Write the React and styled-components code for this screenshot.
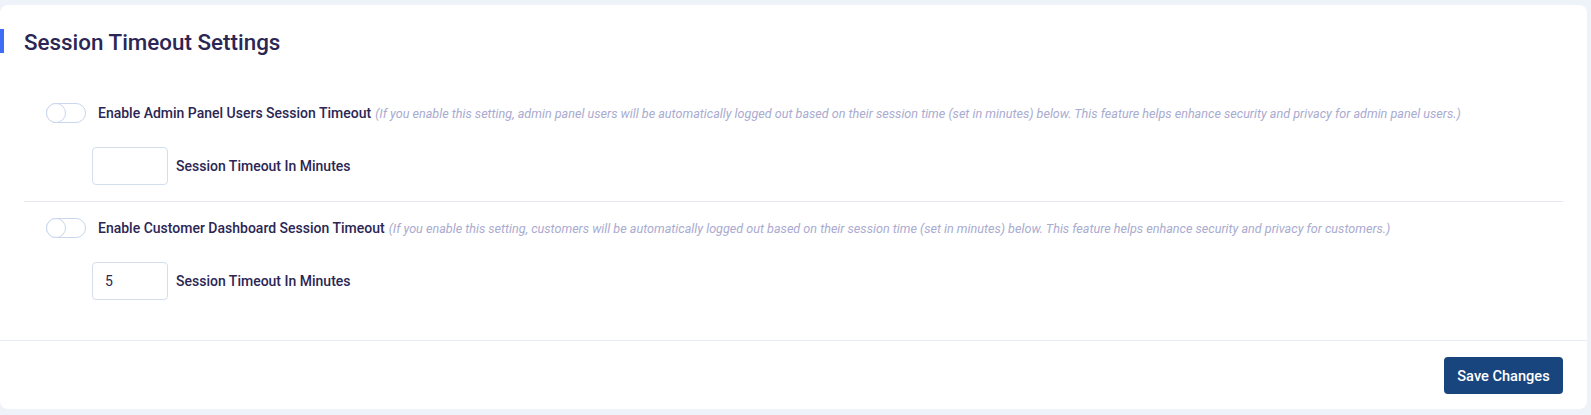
import React from 'react'
import styled, { createGlobalStyle } from 'styled-components'

const Global = createGlobalStyle`
  body {
    margin: 0;
    background: #eef2f9;
    font-family: Roboto, "Liberation Sans", sans-serif;
  }
`

const Page = styled.div`
  padding-top: 5px;
  padding-right: 4px;
`

const Card = styled.div`
  background: #fff;
  border-radius: 8px;
  height: 404px;
  display: flex;
  flex-direction: column;
`

const Header = styled.div`
  position: relative;
  padding: 24px 24px 0;
  &::before {
    content: '';
    position: absolute;
    left: 0;
    top: 24px;
    width: 4px;
    height: 24px;
    background: #3d6ef5;
  }
`

const Title = styled.h2`
  margin: 0;
  font-size: 22.4px;
  line-height: 26px;
  font-weight: 500;
  color: #2b2654;
`

const Body = styled.div`
  padding: 32px 0 24px;
  flex: 1;
`

const Section = styled.div`
  padding: 16px 46px;
  display: flex;
  flex-direction: column;
  gap: 24px;
`

const Divider = styled.hr`
  margin: 0 24px;
  border: 0;
  border-top: 1px solid #e6e8ef;
`

const ToggleRow = styled.div`
  display: flex;
  align-items: center;
  gap: 12px;
  height: 20px;
`

const Toggle = styled.span`
  box-sizing: border-box;
  width: 40px;
  height: 20px;
  border: 1px solid #c9d6ee;
  border-radius: 10px;
  position: relative;
  flex-shrink: 0;
  &::after {
    content: '';
    position: absolute;
    left: -1px;
    top: -1px;
    width: 20px;
    height: 20px;
    box-sizing: border-box;
    border: 1px solid #c9d6ee;
    border-radius: 50%;
    background: #fff;
  }
`

const Label = styled.span`
  font-size: 14px;
  font-weight: 500;
  color: #2b2654;
  white-space: nowrap;
`

const Help = styled.em`
  font-size: 12.6px;
  font-weight: 400;
  color: #a9abd0;
  margin-left: 4px;
`

const InputRow = styled.div`
  display: flex;
  align-items: center;
  gap: 8px;
  padding-left: 46px;
`

const Input = styled.input`
  box-sizing: border-box;
  width: 76px;
  height: 38px;
  border: 1px solid #d3dfec;
  border-radius: 4px;
  padding: 0 12px;
  font-family: Roboto, "Liberation Sans", sans-serif;
  font-size: 14px;
  color: #2b2654;
  outline: none;
`

const Footer = styled.div`
  border-top: 1px solid #e6ebf5;
  padding: 16px 24px 15px;
  display: flex;
  justify-content: flex-end;
`

const Button = styled.button`
  height: 37px;
  width: 119px;
  background: #19457e;
  color: #fff;
  border: 0;
  border-radius: 4px;
  font-family: Roboto, "Liberation Sans", sans-serif;
  font-size: 14.6px;
  font-weight: 500;
`

const settings = [
  {
    label: 'Enable Admin Panel Users Session Timeout',
    help: '(If you enable this setting, admin panel users will be automatically logged out based on their session time (set in minutes) below. This feature helps enhance security and privacy for admin panel users.)',
    value: '',
  },
  {
    label: 'Enable Customer Dashboard Session Timeout',
    help: '(If you enable this setting, customers will be automatically logged out based on their session time (set in minutes) below. This feature helps enhance security and privacy for customers.)',
    value: '5',
  },
]

export default function App() {
  return (
    <Page>
      <Global />
      <Card>
        <Header>
          <Title>Session Timeout Settings</Title>
        </Header>
        <Body>
          {settings.map((s, i) => (
            <React.Fragment key={i}>
              {i > 0 && <Divider />}
              <Section>
                <ToggleRow>
                  <Toggle />
                  <Label>
                    {s.label}
                    <Help>{s.help}</Help>
                  </Label>
                </ToggleRow>
                <InputRow>
                  <Input defaultValue={s.value} />
                  <Label>Session Timeout In Minutes</Label>
                </InputRow>
              </Section>
            </React.Fragment>
          ))}
        </Body>
        <Footer>
          <Button>Save Changes</Button>
        </Footer>
      </Card>
    </Page>
  )
}
